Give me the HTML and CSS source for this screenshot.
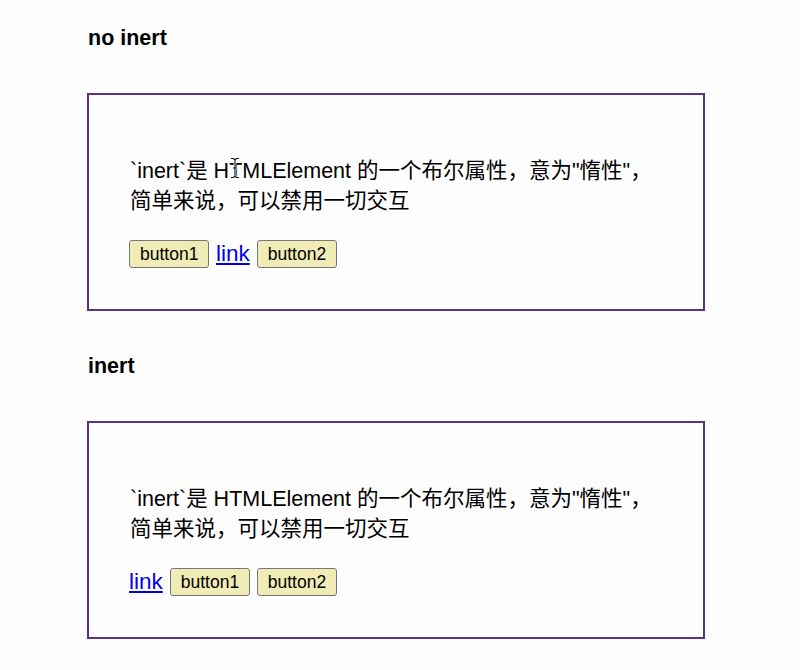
FILE: index.html
```html
<!DOCTYPE html>
<html>
<head>
<meta charset="utf-8">
<link rel="stylesheet" href="styles.css">
</head>
<body>
<div class="page">
  <h3 class="title">no inert</h3>
  <div class="box">
    <p class="text">`inert`是 HTMLElement 的一个布尔属性，意为"惰性"，简单来说，可以禁用一切交互</p>
    <div class="row">
      <button class="btn">button1</button>
      <a class="lnk" href="#">link</a>
      <button class="btn">button2</button>
    </div>
    <svg class="cursor" width="10" height="22" viewBox="0 0 10 22">
      <path d="M1 1.5 H3.5 L5 3 L6.5 1.5 H9 M5 3 V19 M1 20.5 H3.5 L5 19 L6.5 20.5 H9 M3 11 H7" fill="none" stroke="#fff" stroke-width="2.6"/>
      <path d="M1 1.5 H3.5 L5 3 L6.5 1.5 H9 M5 3 V19 M1 20.5 H3.5 L5 19 L6.5 20.5 H9 M3 11 H7" fill="none" stroke="#111" stroke-width="1.1"/>
    </svg>
  </div>
  <h3 class="title">inert</h3>
  <div class="box">
    <p class="text">`inert`是 HTMLElement 的一个布尔属性，意为"惰性"，简单来说，可以禁用一切交互</p>
    <div class="row">
      <a class="lnk" href="#">link</a>
      <button class="btn">button1</button>
      <button class="btn">button2</button>
    </div>
  </div>
</div>
</body>
</html>
```

FILE: styles.css
```css
html, body {
  margin: 0;
  padding: 0;
  background: #fefefe;
}
.page {
  display: flex;
  flex-direction: column;
  padding: 26px 0 0 87px;
  width: 618px;
  font-family: "Liberation Sans", "Noto Sans CJK SC", sans-serif;
  color: #000;
}
.title {
  margin: 0 0 43px 1px;
  font-size: 21.5px;
  line-height: 24px;
  font-weight: bold;
}
.box {
  position: relative;
  border: 2px solid #5b3186;
  padding: 40px;
  margin-bottom: 43px;
  height: 134px;
}
.text {
  margin: 21px 0 0 1px;
  font-size: 21.5px;
  line-height: 30px;
  width: 526px;
}
.row {
  display: flex;
  align-items: center;
  gap: 7px;
  margin-top: 23px;
  height: 30px;
}
.btn {
  font-family: "Liberation Sans", sans-serif;
  font-size: 17.5px;
  height: 28px;
  padding: 0 10px;
  border: 1px solid #767676;
  border-radius: 3px;
  background: #f1ebb6;
  color: #000;
  box-sizing: border-box;
  width: 80px;
}
.lnk {
  font-size: 22.5px;
  color: #0000ee;
  text-decoration: underline;
  line-height: 28px;
}
.cursor {
  position: absolute;
  left: 141px;
  top: 62px;
}
```
